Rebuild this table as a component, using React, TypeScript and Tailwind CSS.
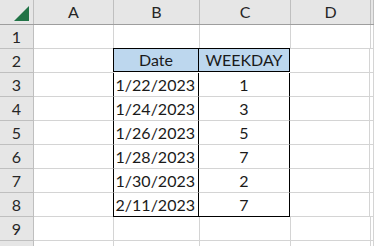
const cols = ['A', 'B', 'C', 'D', '']
const colWidths = ['w-[80px]', 'w-[86px]', 'w-[91px]', 'w-[80px]', 'flex-1']

const rows: { date: string; day: number }[] = [
  { date: '1/22/2023', day: 1 },
  { date: '1/24/2023', day: 3 },
  { date: '1/26/2023', day: 5 },
  { date: '1/28/2023', day: 7 },
  { date: '1/30/2023', day: 2 },
  { date: '2/11/2023', day: 7 },
]

function Cell({ col, row }: { col: number; row: number }) {
  const base = `${colWidths[col]} h-full shrink-0 border-r border-b border-[#d4d4d4] flex items-center`
  // table lives in B2:C8
  if (row === 2 && col === 1)
    return <div className={`${base} justify-center bg-[#bdd7ee] !border-black border-l border-t -ml-px -mt-px`}>Date</div>
  if (row === 2 && col === 2)
    return <div className={`${base} justify-center bg-[#bdd7ee] !border-black border-t -mt-px`}>WEEKDAY</div>
  if (row >= 3 && row <= 8) {
    const r = rows[row - 3]
    if (col === 1)
      return <div className={`${base} justify-end pr-[3px] !border-r-black border-l border-l-black -ml-px ${row === 8 ? '!border-b-black' : ''}`}>{r.date}</div>
    if (col === 2)
      return <div className={`${base} justify-center !border-r-black ${row === 8 ? '!border-b-black' : ''}`}>{r.day}</div>
  }
  return <div className={base}></div>
}

export default function App() {
  return (
    <div className="w-[374px] h-[246px] overflow-hidden bg-white text-[16px] text-[#1a1a1a] font-['Lato','Open_Sans',sans-serif]">
      {/* column header strip */}
      <div className="flex h-[25px] bg-[#e6e6e6] border-b border-[#9e9e9e] text-[#262626]">
        <div className="w-[34px] shrink-0 h-full border-r border-[#bfbfbf] flex items-end justify-end pr-[4px] pb-[3px]">
          <svg width="15" height="15" viewBox="0 0 16 16">
            <polygon points="16,0 16,16 0,16" fill="#217346" />
          </svg>
        </div>
        {cols.map((c, i) => (
          <div key={i} className={`${colWidths[i]} shrink-0 h-full border-r border-[#bfbfbf] flex items-center justify-center`}>
            {c}
          </div>
        ))}
      </div>
      {Array.from({ length: 10 }, (_, k) => k + 1).map(row => (
        <div key={row} className="flex h-[24px]">
          <div className="w-[34px] shrink-0 h-full bg-[#e6e6e6] border-r border-b border-[#bfbfbf] flex items-center justify-center text-[#262626]">
            {row < 10 ? row : ''}
          </div>
          {cols.map((_, col) => (
            <Cell key={col} col={col} row={row} />
          ))}
        </div>
      ))}
    </div>
  )
}
